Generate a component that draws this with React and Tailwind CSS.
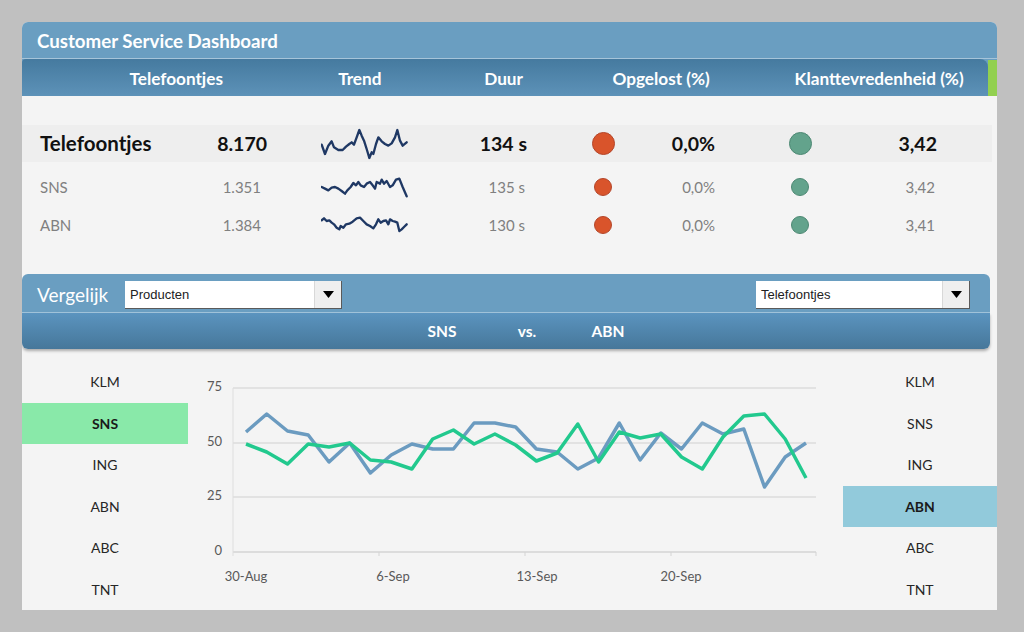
import React from "react";

const BLUE = [83, 65, 82, 86, 113, 94, 124, 106, 95, 100, 100, 74, 74, 78, 100, 103, 120, 109, 74, 111, 84, 100, 74, 85, 80, 138, 108, 94];
const GREEN = [95, 103, 115, 95, 98, 94, 111, 113, 120, 90, 81, 95, 85, 96, 112, 104, 75, 113, 83, 89, 85, 108, 120, 88, 67, 65, 90, 129];
const pts = (arr) => arr.map((y, i) => `${(58 + i * 20.74).toFixed(1)},${y}`).join(" ");

const SPARK1 = "35,72 45,100 55,75 65,62 72,80 85,88 98,88 108,78 118,70 125,65 132,72 140,50 148,28 155,45 162,60 170,85 178,112 185,95 190,100 198,70 205,50 215,62 225,70 235,75 245,68 255,50 262,28 270,60 278,75 290,65";
const SPARK2 = "35,200 45,205 55,210 65,202 75,200 85,205 95,212 105,220 112,210 122,200 130,188 138,195 145,185 152,195 162,200 170,190 180,185 188,195 195,205 200,185 210,190 215,178 222,190 230,182 240,200 248,195 258,178 268,175 278,200 290,228";
const SPARK3 = "35,298 42,292 50,300 58,298 65,305 72,310 80,320 88,325 92,315 100,320 108,310 118,308 128,302 140,292 150,290 160,300 170,310 180,315 190,322 198,310 205,295 212,305 220,300 228,298 235,310 240,295 248,300 255,302 262,305 268,330 275,325 282,318 290,310";

function Spark({ points, minY, h }) {
  return (
    <svg width="87" height={h / 3} viewBox={`33 ${minY} 261 ${h}`} preserveAspectRatio="none">
      <polyline points={points} fill="none" stroke="#1f3864" strokeWidth="7" strokeLinejoin="round" strokeLinecap="round" />
    </svg>
  );
}

function Dot({ color, big }) {
  if (color === "red") {
    return <div className={big ? "w-[23px] h-[23px] rounded-full bg-[#d9542b] border border-[#b4462a]" : "w-[18px] h-[18px] rounded-full bg-[#d9542b] border border-[#b4462a]"} />;
  }
  return <div className={big ? "w-[23px] h-[23px] rounded-full bg-[#63a38c] border border-[#4d8873]" : "w-[18px] h-[18px] rounded-full bg-[#63a38c] border border-[#4d8873]"} />;
}

function Row({ main, label, num, spark, duur, pct, score }) {
  return (
    <div className={main ? "flex items-center w-[970px] h-[37px] bg-[#eeeeee] text-[19.5px] font-bold text-[#111]" : "flex items-center w-[970px] h-[38px] text-[15px] text-[#808080]"}>
      <div className={main ? "w-[150px] pl-[18px] text-[20.5px]" : "w-[150px] pl-[18px]"}>{label}</div>
      <div className={main ? "w-[95px] text-right" : "w-[95px] text-right pr-[6px]"}>{num}</div>
      <div className="ml-[54px] w-[87px] flex items-center">{spark}</div>
      <div className={main ? "w-[119px] text-right" : "w-[119px] text-right pr-[2px]"}>{duur}</div>
      <div className="ml-[40px] w-[72px] flex justify-center"><Dot color="red" big={main} /></div>
      <div className="w-[76px] text-right">{pct}</div>
      <div className="ml-[49px] w-[72px] flex justify-center"><Dot color="green" big={main} /></div>
      <div className={main ? "w-[101px] text-right" : "w-[101px] text-right pr-[2px]"}>{score}</div>
    </div>
  );
}

function Dropdown({ text, w }) {
  return (
    <div className={`${w} h-[28px] bg-white flex items-center border-r border-b border-[#5a5a5a]`}>
      <span className="flex-1 pl-[5px] text-[13px] font-['Liberation_Sans',sans-serif] text-[#222]">{text}</span>
      <div className="w-[27px] h-full bg-[#efefef] border-l border-[#d8d8d8] flex items-center justify-center">
        <svg width="11" height="7" viewBox="0 0 11 7"><polygon points="0,0 11,0 5.5,7" fill="#000" /></svg>
      </div>
    </div>
  );
}

function List({ items, active, activeClass }) {
  return (
    <div className="flex flex-col pt-[12px]">
      {items.map((it) => (
        <div key={it} className={it === active ? `h-[41.5px] flex items-center justify-center text-[14px] font-bold text-[#1a1a1a] ${activeClass}` : "h-[41.5px] flex items-center justify-center text-[14px] text-[#262626]"}>
          {it}
        </div>
      ))}
    </div>
  );
}

const ITEMS = ["KLM", "SNS", "ING", "ABN", "ABC", "TNT"];

export default function App() {
  return (
    <div className="w-[1024px] h-[632px] bg-[#c0c0c0] pt-[22px] pl-[22px] overflow-hidden font-['Lato',sans-serif]">
      <div className="w-[975px] h-[588px] flex flex-col bg-[#f4f4f4] rounded-t-[6px] overflow-hidden">
        <div className="h-[37px] shrink-0 bg-[#6a9ec1] flex items-center pl-[15px] pt-[3px] text-white font-bold text-[18.7px] border-b border-[#a6c4d9]">
          Customer Service Dashboard
        </div>
        <div className="h-[37px] shrink-0 bg-[#6a9ec1] flex">
          <div className="w-[966px] h-full rounded-tr-[8px] rounded-tl-[4px] bg-linear-to-b from-[#457a9f] to-[#5d92b8] flex items-center pt-[2px] text-white font-bold text-[17.2px]">
            <div className="ml-[80px] w-[150px] text-center">Telefoontjes</div>
            <div className="ml-[51px] w-[118px] text-center">Trend</div>
            <div className="ml-[27px] w-[118px] text-center">Duur</div>
            <div className="ml-[20px] w-[160px] text-center">Opgelost (%)</div>
            <div className="ml-[30px] w-[220px] text-center">Klanttevredenheid (%)</div>
          </div>
          <div className="w-[9px] mt-[1px] bg-[#92d050]" />
        </div>

        <div className="flex-1 flex flex-col pt-[29px]">
          <Row main label="Telefoontjes" num="8.170" spark={<Spark points={SPARK1} minY={22} h={96} />} duur="134 s" pct="0,0%" score="3,42" />
          <div className="mt-[6px]">
            <Row label="SNS" num="1.351" spark={<Spark points={SPARK2} minY={170} h={63} />} duur="135 s" pct="0,0%" score="3,42" />
          </div>
          <Row label="ABN" num="1.384" spark={<Spark points={SPARK3} minY={285} h={54} />} duur="130 s" pct="0,0%" score="3,41" />

          <div className="mt-[30px] w-[968px] flex flex-col">
            <div className="h-[38px] bg-[#6a9ec1] rounded-t-[6px] flex items-center pt-[4px]">
              <div className="w-[103px] pl-[15px] text-white text-[19px]">Vergelijk</div>
              <Dropdown text="Producten" w="w-[217px]" />
              <div className="ml-auto mr-[20px]">
                <Dropdown text="Telefoontjes" w="w-[214px]" />
              </div>
            </div>
            <div className="h-[1px] bg-[#a2c5dc]" />
            <div className="h-[36px] bg-linear-to-b from-[#5b94bf] to-[#46779a] rounded-b-[6px] shadow-[0_2px_3px_rgba(0,0,0,0.3)] flex items-center pt-[2px] text-white font-bold text-[15.5px]">
              <div className="ml-[390px] w-[60px] text-center">SNS</div>
              <div className="ml-[30px] w-[50px] text-center">vs.</div>
              <div className="ml-[26px] w-[60px] text-center">ABN</div>
            </div>
          </div>

          <div className="flex-1 flex">
            <div className="w-[166px]">
              <List items={ITEMS} active="SNS" activeClass="bg-[#89e9a9]" />
            </div>
            <div className="w-[655px]">
              <svg width="655" height="261" viewBox="0 0 655 261">
                <line x1="45" y1="39" x2="628" y2="39" stroke="#dcdcdc" strokeWidth="1.5" />
                <line x1="45" y1="94" x2="628" y2="94" stroke="#dcdcdc" strokeWidth="1.5" />
                <line x1="45" y1="148" x2="628" y2="148" stroke="#dcdcdc" strokeWidth="1.5" />
                <line x1="45" y1="203" x2="628" y2="203" stroke="#d4d4d4" strokeWidth="1.5" />
                <line x1="45" y1="39" x2="45" y2="207" stroke="#dedede" strokeWidth="1" />
                {[191, 337, 483, 628].map((x) => (
                  <line key={x} x1={x} y1="203" x2={x} y2="207" stroke="#d4d4d4" strokeWidth="1" />
                ))}
                {[["75", 39], ["50", 94], ["25", 148], ["0", 203]].map(([t, y]) => (
                  <text key={t} x="34" y={y} textAnchor="end" dominantBaseline="middle" fontSize="13" fill="#595959" fontFamily="Lato, sans-serif">{t}</text>
                ))}
                {[["30-Aug", 58], ["6-Sep", 205], ["13-Sep", 349], ["20-Sep", 493]].map(([t, x]) => (
                  <text key={t} x={x} y="229" textAnchor="middle" dominantBaseline="middle" fontSize="13" fill="#595959" fontFamily="Lato, sans-serif">{t}</text>
                ))}
                <polyline points={pts(BLUE)} fill="none" stroke="#6b9bc0" strokeWidth="3.5" strokeLinejoin="round" />
                <polyline points={pts(GREEN)} fill="none" stroke="#22c98e" strokeWidth="3.5" strokeLinejoin="round" />
              </svg>
            </div>
            <div className="w-[154px]">
              <List items={ITEMS} active="ABN" activeClass="bg-[#92cadb]" />
            </div>
          </div>
        </div>
      </div>
    </div>
  );
}
